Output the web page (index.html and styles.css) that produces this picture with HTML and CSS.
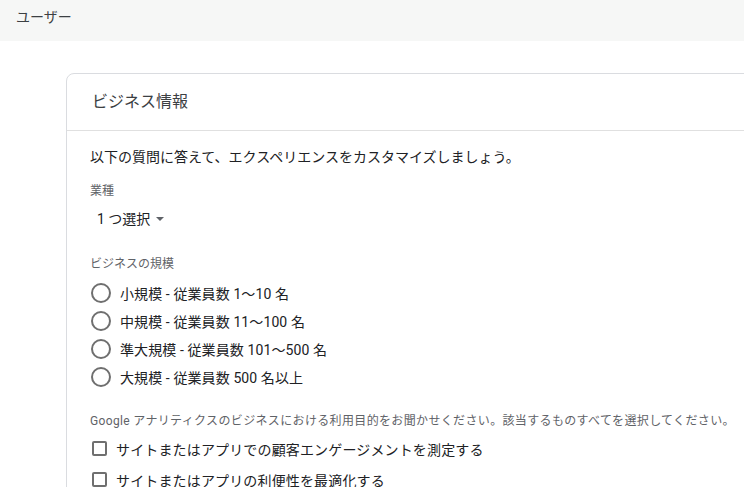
FILE: index.html
```html
<!DOCTYPE html>
<html lang="ja">
<head>
  <meta charset="UTF-8">
  <title>ビジネス情報</title>
  <link rel="stylesheet" href="styles.css">
</head>
<body>

<div class="top-bar">ユーザー</div>

<div class="page">
  <div class="card">
    <div class="card-header">ビジネス情報</div>

    <div class="card-body">
      <p class="intro">以下の質問に答えて、エクスペリエンスをカスタマイズしましょう。</p>

      <div class="field-label">業種</div>
      <div class="select">1 つ選択<span class="caret"></span></div>

      <div class="field-label size-label">ビジネスの規模</div>
      <div class="radio-list">
        <label class="radio-row"><span class="radio"></span>小規模 - 従業員数 1～10 名</label>
        <label class="radio-row"><span class="radio"></span>中規模 - 従業員数 11～100 名</label>
        <label class="radio-row"><span class="radio"></span>準大規模 - 従業員数 101～500 名</label>
        <label class="radio-row"><span class="radio"></span>大規模 - 従業員数 500 名以上</label>
      </div>

      <div class="field-label goal-label">Google アナリティクスのビジネスにおける利用目的をお聞かせください。該当するものすべてを選択してください。</div>
      <div class="check-list">
        <label class="check-row"><span class="checkbox"></span>サイトまたはアプリでの顧客エンゲージメントを測定する</label>
        <label class="check-row"><span class="checkbox"></span>サイトまたはアプリの利便性を最適化する</label>
      </div>
    </div>
  </div>
</div>

</body>
</html>
```

FILE: styles.css
```css
html, body { overflow: hidden; }
body { margin: 0; font-family: Roboto, "Noto Sans CJK JP", sans-serif; color: #202124; background: #fff; }

.top-bar { height: 41px; box-sizing: border-box; padding: 7px 16px; background: #f6f7f6; font-size: 14px; line-height: 20px; color: #3c4043; }

.page { padding: 32px 0 0 66px; }
.card { width: 720px; border: 1px solid #dadce0; border-radius: 8px 8px 0 0; background: #fff; }
.card-header { padding: 16px 25px; font-size: 16px; line-height: 24px; color: #3c4043; border-bottom: 1px solid #e0e0e0; }
.card-body { padding: 16px 23px 40px; }

.intro { margin: 0; font-size: 14px; line-height: 20px; }
.field-label { margin-top: 16px; font-size: 12px; line-height: 16px; color: #5f6368; }
.size-label { margin-top: 27px; }
.goal-label { margin-top: 22px; letter-spacing: 0.35px; white-space: nowrap; }

.select { display: flex; align-items: center; margin-top: 10px; padding-left: 7px; font-size: 14px; line-height: 20px; }
.caret { margin-left: 6px; border-left: 4px solid transparent; border-right: 4px solid transparent; border-top: 4px solid #5f6368; }

.radio-list { margin-top: 7px; }
.radio-row { display: flex; align-items: center; height: 28px; font-size: 14px; letter-spacing: 0.1px; }
.radio { width: 16px; height: 16px; margin: 0 9px 0 1px; border: 2px solid #6f6f6f; border-radius: 50%; }

.check-list { margin-top: 4px; }
.check-row { display: flex; align-items: center; height: 31px; font-size: 14px; letter-spacing: 0.15px; }
.checkbox { width: 11px; height: 11px; margin: 0 9px 0 2px; border: 2px solid #6f6f6f; border-radius: 2px; }
```
